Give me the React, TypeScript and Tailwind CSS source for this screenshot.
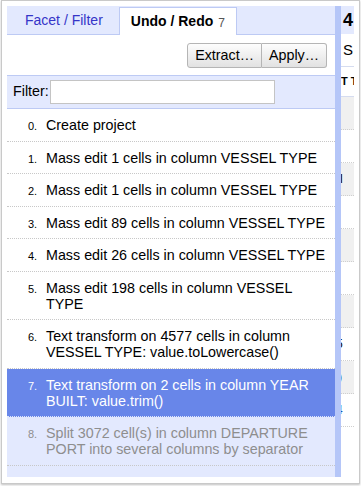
import React from "react";

const items: { n: string; t: string; state: "past" | "now" | "future" }[] = [
  { n: "0.", t: "Create project", state: "past" },
  { n: "1.", t: "Mass edit 1 cells in column VESSEL TYPE", state: "past" },
  { n: "2.", t: "Mass edit 1 cells in column VESSEL TYPE", state: "past" },
  { n: "3.", t: "Mass edit 89 cells in column VESSEL TYPE", state: "past" },
  { n: "4.", t: "Mass edit 26 cells in column VESSEL TYPE", state: "past" },
  { n: "5.", t: "Mass edit 198 cells in column VESSEL TYPE", state: "past" },
  { n: "6.", t: "Text transform on 4577 cells in column VESSEL TYPE: value.toLowercase()", state: "past" },
  { n: "7.", t: "Text transform on 2 cells in column YEAR BUILT: value.trim()", state: "now" },
  { n: "8.", t: "Split 3072 cell(s) in column DEPARTURE PORT into several columns by separator", state: "future" },
];

export default function App() {
  return (
    <div
      className="w-[361px] h-[486px] bg-white overflow-hidden"
      style={{ fontFamily: '"Liberation Sans", Arial, Helvetica, sans-serif' }}
    >
      <div className="ml-[1px] w-[359px] h-[484px] border border-[#c9c9c9] shadow-[0_1px_2px_rgba(0,0,0,0.25)] bg-white pt-[5px] pl-[5px] flex">
        {/* Left panel */}
        <div className="w-[328px] h-[471px] bg-[#e3e9fe] flex flex-col">
          {/* Tabs */}
          <div className="h-[29px] flex items-end border-b border-[#bdcaf4]">
            <div className="h-[28px] pl-[18px] pr-[16px] flex items-center text-[14px] text-[#3535c8]">
              Facet / Filter
            </div>
            <div className="h-[28px] -mb-px px-[11px] flex items-center bg-white border-t border-l border-r border-[#bdcaf4] text-[14px]">
              <span className="font-bold text-black">Undo / Redo</span>
              <span className="ml-[5px] text-[12px] text-[#555] mt-[2px]">7</span>
            </div>
          </div>
          {/* Buttons */}
          <div className="h-[40px] bg-white flex justify-end items-start pt-[8px] pr-[8px]">
            <button className="h-[25px] px-[7px] text-[14.3px] text-black border border-[#b5b5b5] rounded-l-[3px] bg-gradient-to-b from-[#fdfdfd] to-[#e2e2e2]">
              Extract…
            </button>
            <button className="h-[25px] px-[7px] text-[14.3px] text-black border border-l-0 border-[#b5b5b5] rounded-r-[3px] bg-gradient-to-b from-[#fdfdfd] to-[#e2e2e2]">
              Apply…
            </button>
          </div>
          {/* Filter */}
          <div className="h-[34px] border-t border-b border-[#bdcaf4] flex items-center pl-[6px]">
            <span className="text-[14.3px] text-black">Filter:</span>
            <div className="ml-px w-[225px] h-[24px] bg-white border border-[#c4c4c4]" />
          </div>
          {/* List */}
          <div className="flex-1">
            {items.map((it) => {
              const base =
                it.state === "now"
                  ? "bg-[#6886e9] text-white border-[#dfe6fb]"
                  : it.state === "future"
                  ? "text-[#8e8e8e] border-[#c8c8c8]"
                  : "bg-white text-black border-[#c8c8c8]";
              return (
                <div
                  key={it.n}
                  className={`flex items-start pl-[21px] pr-[5px] pt-[8px] pb-[7.5px] border-b border-dotted ${base}`}
                >
                  <span className="w-[18px] shrink-0 text-[11px] leading-[14px] pt-[2px]">{it.n}</span>
                  <span className="text-[14.3px] leading-4">{it.t}</span>
                </div>
              );
            })}
          </div>
        </div>
        {/* Vertical bar */}
        <div className="w-[6px] h-[471px] bg-[#b5c6f8]" />
        {/* Right fragment */}
        <div className="w-[13px] h-[471px] overflow-hidden flex flex-col bg-white">
          <div className="h-[28px] bg-[#e3e9fe] flex items-center pl-[2px] text-[18px] font-bold leading-none">
            4
          </div>
          <div className="h-[33px] border-b border-[#d5dcf0] flex items-center pl-[2px] text-[15px]">
            S
          </div>
          <div className="h-[30px] border-b border-[#d5dcf0] flex items-center text-[11px] font-bold whitespace-nowrap">
            T T
          </div>
          {[0, 1, 2, 3, 4, 5, 6, 7, 8, 9].map((i) => (
            <div
              key={i}
              className={`h-[33px] shrink-0 border-b border-dotted border-[#cfcfcf] flex items-center text-[12px] whitespace-nowrap ${
                i % 2 === 0 ? "bg-[#f0f0f0]" : "bg-white"
              }`}
            >
              {i === 2 ? <span className="-ml-[1px]">l</span> : null}
              {i === 7 ? <span className="-ml-[5px]">5</span> : null}
              {i === 8 ? <span className="-ml-[3px]">)</span> : null}
              {i === 9 ? <span className="-ml-[5px] text-[#1a4fb0]">4</span> : null}
            </div>
          ))}
        </div>
      </div>
    </div>
  );
}
